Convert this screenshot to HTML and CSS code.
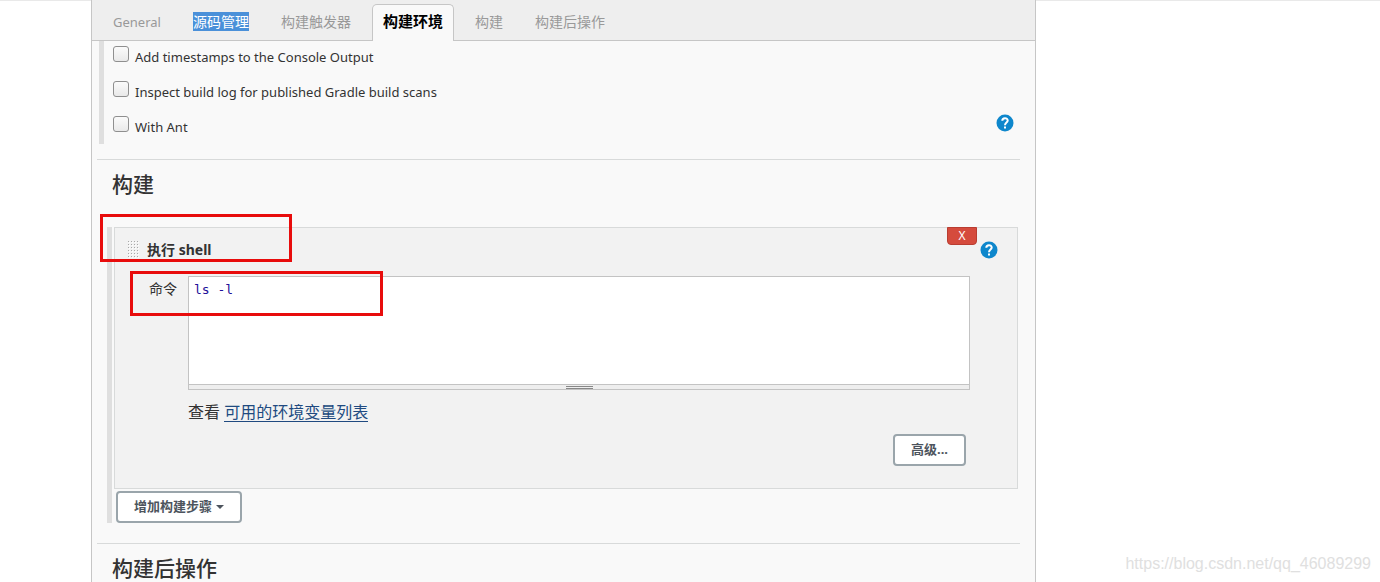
FILE: index.html
```html
<!doctype html>
<html lang="zh-cn">
  <head>
    <meta charset="UTF-8" />
    <meta name="viewport" content="width=device-width, initial-scale=1.0" />
    <title>构建环境</title>
    <link rel="stylesheet" href="styles.css">
  </head>

  <body>
    <main class="config-panel">
      <nav class="tab-bar">
        <a class="tab" href="#general">General</a>
        <a class="tab" href="#scm"><span class="selected-text">源码管理</span></a>
        <a class="tab" href="#triggers">构建触发器</a>
        <a class="tab active" href="#environment">构建环境</a>
        <a class="tab" href="#build">构建</a>
        <a class="tab" href="#post-build">构建后操作</a>
      </nav>

      <section class="section" id="environment">
        <div class="option-list">
          <div class="option">
            <input type="checkbox" id="timestamps" />
            <label for="timestamps">Add timestamps to the Console Output</label>
          </div>
          <div class="option">
            <input type="checkbox" id="gradle" />
            <label for="gradle">Inspect build log for published Gradle build scans</label>
          </div>
          <div class="option">
            <input type="checkbox" id="ant" />
            <label for="ant">With Ant</label>
            <button class="help" type="button" aria-label="Help">
              <svg viewBox="0 0 18 18">
                <circle cx="9" cy="9" r="8.5" />
                <path d="M6.3 6.8C6.3 3.4 11.7 3.4 11.7 6.6C11.7 8.6 9 8.6 9 11.2" />
                <path d="M9 12.6V14.4" />
              </svg>
            </button>
          </div>
        </div>
      </section>

      <section class="section" id="build">
        <h2 class="section-title">构建</h2>
        <div class="steps">
          <div class="step">
            <header class="step-header">
              <svg class="drag-handle" viewBox="0 0 12 18">
                <path class="light" d="M1.5 1V18M4.5 1V18M7.5 1V18M10.5 1V18" />
                <path d="M.5 0V18M3.5 0V18M6.5 0V18M9.5 0V18" />
              </svg>
              <h3 class="step-title">执行 shell</h3>
              <button class="delete" type="button">X</button>
              <button class="help" type="button" aria-label="Help">
                <svg viewBox="0 0 18 18">
                  <circle cx="9" cy="9" r="8.5" />
                  <path d="M6.3 6.8C6.3 3.4 11.7 3.4 11.7 6.6C11.7 8.6 9 8.6 9 11.2" />
                  <path d="M9 12.6V14.4" />
                </svg>
              </button>
            </header>
            <div class="step-body">
              <label class="field-label" for="command">命令</label>
              <div class="field">
                <div class="editor">
                  <textarea id="command" spellcheck="false">ls -l</textarea>
                  <div class="resizer"></div>
                </div>
                <p class="env-hint">查看 <a href="#env-vars">可用的环境变量列表</a></p>
                <div class="step-actions">
                  <button class="btn" type="button">高级...</button>
                </div>
              </div>
            </div>
            <div class="mark mark-command"></div>
          </div>
          <button class="btn add-step" type="button">增加构建步骤 <span class="caret"></span></button>
          <div class="mark mark-title"></div>
        </div>
      </section>

      <section class="section" id="post-build">
        <h2 class="section-title">构建后操作</h2>
      </section>
    </main>

    <div class="watermark">https://blog.csdn.net/qq_46089299</div>
  </body>
</html>
```
FILE: styles.css
```css
:root {
  --panel-bg: #f9f9f9;
  --step-bg: #f2f2f2;
  --line: #d8dada;
  --line-dark: #c6c6c6;
  --text-color: #333333;
  --link-color: #204a80;
  --help-color: #0e87cc;
  --mark-color: #e80c0c;
}

*,
*::before {
  box-sizing: border-box;
  margin: 0;
  padding: 0;
}

body {
  min-height: 100vh;
  display: flex;
  padding: 0 344px 0 91px;
  background: #ffffff;
  box-shadow: inset 0 1px #e9e9e9;
  overflow: hidden;
  position: relative;
  color: var(--text-color);
  font-family: 'Noto Sans', 'Noto Sans CJK SC', sans-serif;
  font-size: 13px;
}

button,
textarea {
  font-family: inherit;
}

.config-panel {
  flex: 1;
  min-width: 0;
  height: 100vh;
  overflow: hidden;
  background: var(--panel-bg);
  border: 1px solid var(--line-dark);
  border-width: 0 1px;
}

/* tabs */
.tab-bar {
  display: flex;
  gap: 10px;
  height: 41px;
  padding: 4px 10px 0;
  background: #eeeeee;
  border-bottom: 1px solid var(--line-dark);
}

.tab {
  height: 37px;
  padding: 0 10px;
  border: 1px solid transparent;
  border-bottom: 0;
  border-radius: 5px 5px 0 0;
  color: #999999;
  font-size: 14px;
  line-height: 34px;
  text-decoration: none;
  white-space: nowrap;
}

.tab:first-child {
  font-size: 13px;
}

.tab.active {
  background: var(--panel-bg);
  border-color: var(--line-dark);
  color: #000000;
  font-size: 15px;
  font-weight: 700;
  line-height: 32px;
}

.selected-text {
  display: inline-block;
  background: #4a90d9;
  color: #ffffff;
  line-height: 19px;
}

/* sections */
.section {
  margin: 0 15px 0 5px;
}

.section + .section {
  border-top: 1px solid var(--line);
}

.section-title {
  padding: 8px 15px 0;
  font-size: 21px;
  font-weight: 500;
  line-height: 32px;
}

.option-list {
  display: grid;
  gap: 13px;
  margin: 0 0 15px 2px;
  padding: 5px 6px 6px 9px;
  border-left: 5px solid #dfdfdf;
}

.option {
  display: flex;
  height: 22px;
  line-height: 22px;
}

.option input {
  appearance: none;
  width: 16px;
  height: 16px;
  margin-right: 6px;
  background: linear-gradient(#fbfbfb, #e9e9e9);
  border: 1px solid #8f8f8f;
  border-radius: 3px;
}

.help {
  width: 18px;
  height: 18px;
  margin-left: auto;
  background: none;
  border: 0;
  cursor: pointer;
}

.option .help {
  margin-top: -2px;
}

.help svg {
  display: block;
  fill: none;
  stroke: #ffffff;
  stroke-width: 2;
}

.help circle {
  fill: var(--help-color);
  stroke: none;
}

/* build steps */
.steps {
  position: relative;
  margin: 27px 2px 20px 10px;
  padding-left: 2px;
  border-left: 5px solid #dfdfdf;
}

.step {
  position: relative;
  height: 262px;
  background: var(--step-bg);
  border: 1px solid var(--line);
}

.step-header {
  display: flex;
  height: 48px;
  padding: 0 19px 0 13px;
}

.drag-handle {
  width: 12px;
  height: 18px;
  margin: 13px 7px 0 0;
  stroke: #a8a8a8;
  stroke-width: 1;
  stroke-dasharray: 1 2;
}

.drag-handle .light {
  stroke: #ffffff;
}

.step-title {
  font-size: 14px;
  font-weight: 700;
  line-height: 44px;
}

.delete {
  width: 30px;
  height: 18px;
  margin: -1px 3px 0 auto;
  background: #d54b3d;
  border: 1px solid #b93d31;
  border-radius: 0 0 4px 4px;
  color: #ffffff;
  font-size: 12px;
  line-height: 16px;
}

.step-header .help {
  margin: 13px 0 0;
}

.step-body {
  display: flex;
  padding: 0 47px 0 34px;
}

.field-label {
  width: 39px;
  font-size: 14px;
  line-height: 26px;
}

.field {
  flex: 1;
  min-width: 0;
}

.editor {
  border: 1px solid #c3c3c3;
  background: #ffffff;
}

.editor textarea {
  display: block;
  width: 100%;
  height: 107px;
  padding: 5px;
  border: 0;
  outline: 0;
  resize: none;
  background: transparent;
  color: #221199;
  font-family: 'DejaVu Sans Mono', monospace;
  font-size: 13px;
  line-height: 16px;
}

.resizer {
  display: flex;
  justify-content: center;
  height: 5px;
  padding-top: 1px;
  background: #eeeeee;
  border-top: 1px solid #c3c3c3;
}

.resizer::before {
  content: '';
  width: 27px;
  height: 3px;
  border: 1px solid #888888;
  border-width: 1px 0;
}

.env-hint {
  padding-top: 10px;
  font-size: 16px;
  line-height: 24px;
}

.env-hint a {
  display: inline-block;
  border-bottom: 1px solid var(--link-color);
  color: var(--link-color);
  line-height: 18px;
  text-decoration: none;
}

.step-actions {
  display: flex;
  justify-content: flex-end;
  padding: 10px 4px 0;
}

.btn {
  height: 32px;
  padding: 0 16px 3px;
  background: #ffffff;
  border: 2px solid #9aa5ab;
  border-radius: 4px;
  color: #4d545d;
  cursor: pointer;
  font-size: 13px;
  font-weight: 700;
}

.add-step {
  display: block;
  margin: 2px 0 0 2px;
}

.caret {
  display: inline-block;
  margin-left: 1px;
  border: 4px solid transparent;
  border-top-color: #4d545d;
  border-bottom: 0;
  vertical-align: middle;
}

/* red highlight frames over the form */
.mark {
  position: absolute;
  border: 3px solid var(--mark-color);
  pointer-events: none;
}

.mark-title {
  top: -13px;
  left: -12px;
  width: 192px;
  height: 48px;
}

.mark-command {
  top: 43px;
  left: 15px;
  width: 253px;
  height: 45px;
}

.watermark {
  position: absolute;
  right: 9px;
  bottom: 8px;
  color: #e0e0e0;
  font-family: 'Liberation Sans', sans-serif;
  font-size: 16px;
  line-height: 20px;
}
```
